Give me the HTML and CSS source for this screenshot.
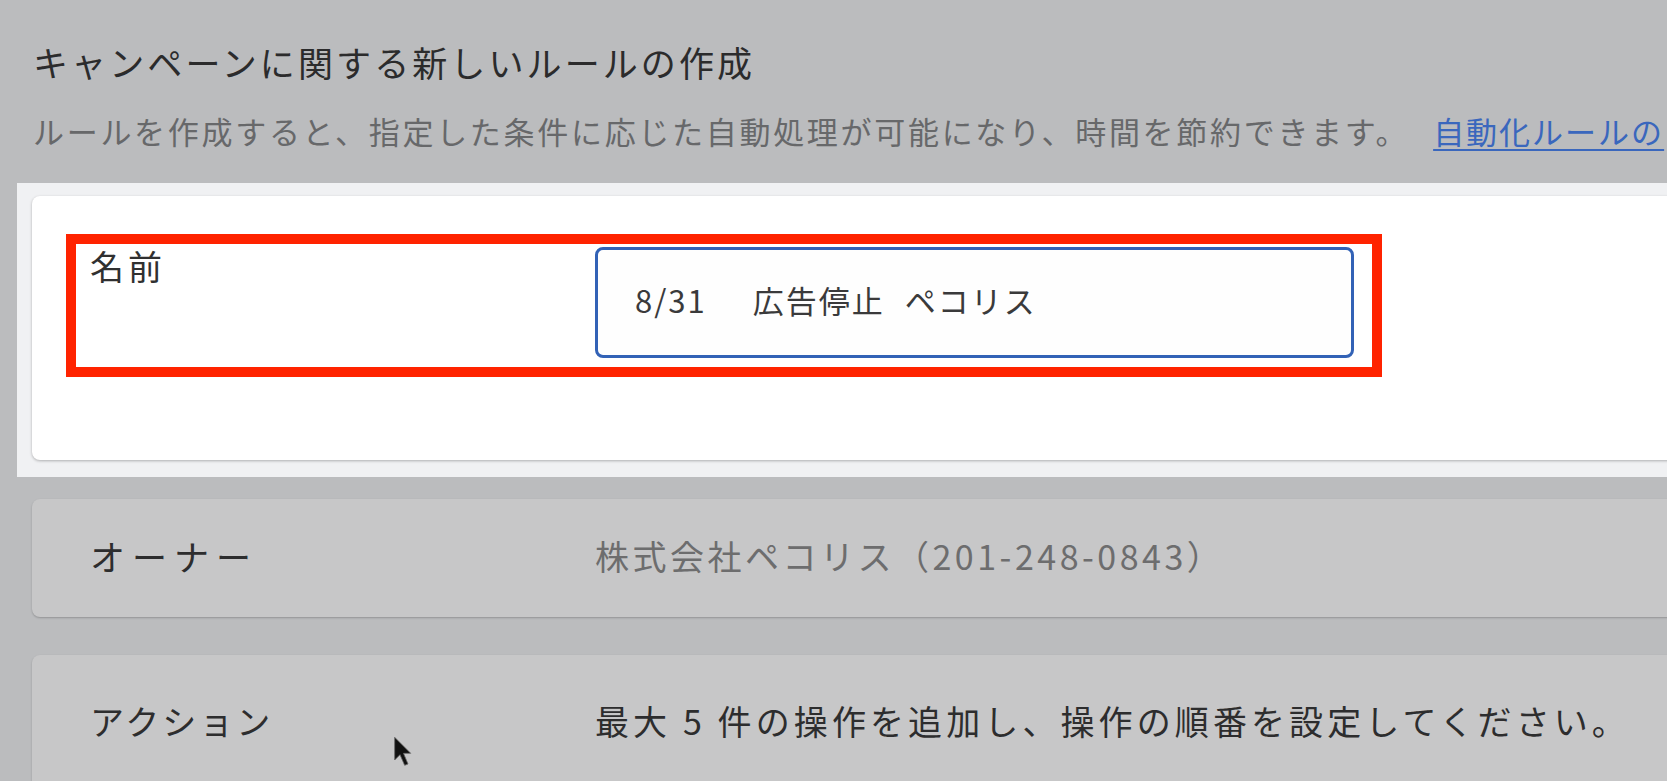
FILE: index.html
```html
<!DOCTYPE html>
<html lang="ja">
<head>
<meta charset="utf-8">
<title>キャンペーンに関する新しいルールの作成</title>
<link rel="stylesheet" href="styles.css">
</head>
<body>
<div class="page">
  <header class="header">
    <h1 class="title">キャンペーンに関する新しいルールの作成</h1>
    <p class="subtitle">ルールを作成すると、指定した条件に応じた自動処理が可能になり、時間を節約できます。<a class="link" href="#">自動化ルールの</a></p>
  </header>

  <section class="band">
    <div class="card card-active">
      <div class="name-row">
        <div class="label">名前</div>
        <div class="field"><span class="seg seg-date">8/31</span> <span class="seg seg-mid">広告停止</span> <span class="seg">ペコリス</span></div>
      </div>
    </div>
  </section>

  <section class="card card-dim card-owner">
    <div class="label label-owner">オーナー</div>
    <div class="value value-muted">株式会社ペコリス（201-248-0843）</div>
  </section>

  <section class="card card-dim card-action">
    <div class="label">アクション</div>
    <div class="value value-action">最大 5 件の操作を追加し、操作の順番を設定してください。</div>
  </section>

  <svg class="cursor" width="22" height="32" viewBox="0 0 16 24" aria-hidden="true">
    <path d="M1 1 L1 18 L5 14 L8.5 22 L11 21 L7.6 13 L13 13 Z" fill="#111" stroke="#666" stroke-width="0.6" stroke-linejoin="round"/>
  </svg>
</div>
</body>
</html>
```

FILE: styles.css
```css
html, body {
  margin: 0;
  padding: 0;
}

body {
  width: 1667px;
  height: 781px;
  overflow: hidden;
  background: #bbbcbe;
  font-family: "Noto Sans CJK JP", "Noto Sans", sans-serif;
  color: #2c2c2d;
}

.page {
  position: relative;
  height: 781px;
  overflow: hidden;
}

.header {
  padding: 40px 0 0 33px;
  white-space: nowrap;
}

.title {
  margin: 0;
  font-size: 35px;
  line-height: 44px;
  font-weight: 400;
  letter-spacing: 3.1px;
  color: #2b2b2c;
}

.subtitle {
  margin: 27px 0 0 0;
  font-size: 31px;
  line-height: 40px;
  letter-spacing: 2.7px;
  color: #67686a;
}

.link {
  margin-left: 24px;
  color: #3a67bd;
  letter-spacing: 2px;
  text-decoration: underline;
  text-decoration-thickness: 2px;
  text-underline-offset: 5px;
}

.band {
  margin: 32px 0 0 17px;
  padding: 13px 0 17px 15px;
  background: #f0f1f3;
}

.card {
  border-radius: 8px 0 0 8px;
  margin-right: -30px;
}

.card-active {
  height: 264px;
  box-sizing: border-box;
  padding-top: 38px;
  padding-left: 34px;
  background: #ffffff;
  box-shadow: 0 1px 3px rgba(0, 0, 0, 0.28);
}

.name-row {
  display: flex;
  align-items: flex-start;
  padding: 3px 0 9px 14px;
  border: 10px solid #ff2300;
  box-sizing: content-box;
  width: 1282px;
}

.label {
  width: 505px;
  flex: none;
  font-size: 34px;
  line-height: 40px;
  letter-spacing: 3px;
  color: #2d2d2e;
}

.name-row .label {
  line-height: 38px;
  letter-spacing: 4px;
  color: #303030;
}

.label-owner {
  font-size: 35px;
  letter-spacing: 7px;
}

.field {
  width: 759px;
  height: 111px;
  box-sizing: border-box;
  border: 3px solid #3262b6;
  border-radius: 8px;
  padding: 0 0 6px 37px;
  display: flex;
  align-items: center;
  font-size: 31px;
  letter-spacing: 2px;
  color: #3a3a3b;
  background: #fefefe;
  white-space: pre;
}

.seg {
  display: inline-block;
}

.seg-date {
  margin-right: 46px;
}

.seg-mid {
  margin-right: 20px;
}

.card-dim {
  display: flex;
  align-items: center;
  margin-left: 32px;
  padding-left: 58px;
  background: #c7c7c8;
  box-shadow: 0 1px 2px rgba(0, 0, 0, 0.22);
}

.card-owner {
  margin-top: 22px;
  height: 118px;
  padding-bottom: 4px;
  box-sizing: border-box;
}

.card-action {
  margin-top: 38px;
  height: 160px;
  align-items: flex-start;
  padding-top: 46px;
  box-sizing: border-box;
}

.value {
  font-size: 34px;
  line-height: 40px;
  letter-spacing: 3.5px;
  color: #2d2d2e;
  white-space: nowrap;
}

.value-muted {
  color: #6d6d6e;
}

.value-action {
  letter-spacing: 4.1px;
}

.cursor {
  position: absolute;
  left: 393px;
  top: 736px;
}
```
